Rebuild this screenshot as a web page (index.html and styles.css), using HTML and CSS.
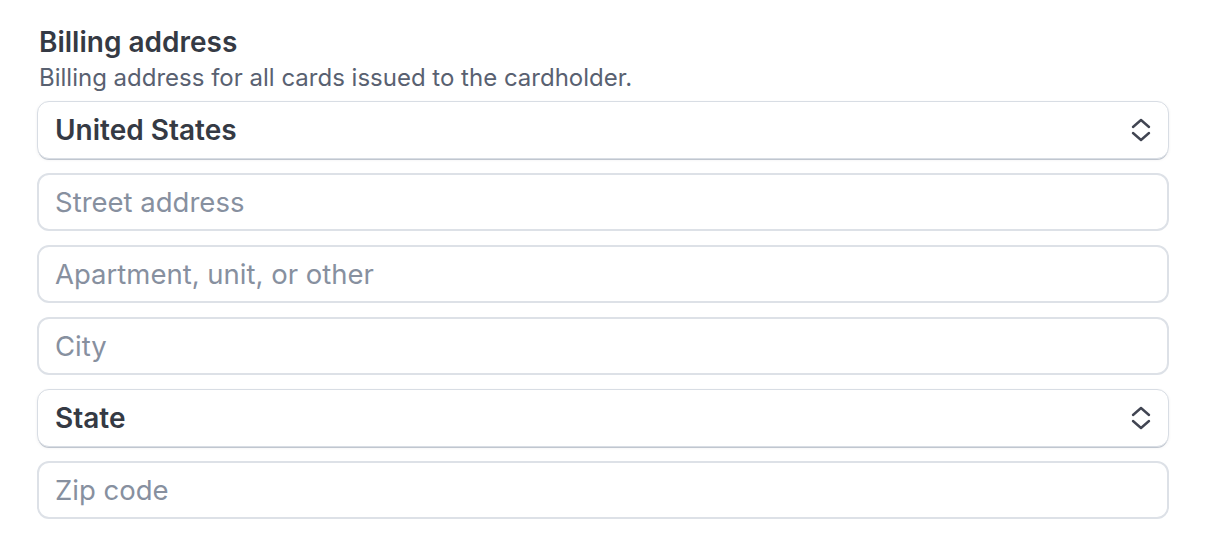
FILE: index.html
```html
<!DOCTYPE html>
<html lang="en">
<head>
  <meta charset="UTF-8" />
  <title>Billing address</title>
  <link rel="stylesheet" href="styles.css">
</head>
<body>
  <div class="section">
    <h2 class="title">Billing address</h2>
    <p class="subtitle">Billing address for all cards issued to the cardholder.</p>

    <div class="fields">
      <div class="select">
        <span class="value">United States</span>
        <svg class="chevrons" width="20" height="24" viewBox="0 0 20 24" fill="none" stroke="#414552" stroke-width="2.4" stroke-linecap="round" stroke-linejoin="round">
          <path d="M2 9 L10 2 L18 9" />
          <path d="M2 15 L10 22 L18 15" />
        </svg>
      </div>
      <input class="input" type="text" placeholder="Street address">
      <input class="input" type="text" placeholder="Apartment, unit, or other">
      <input class="input" type="text" placeholder="City">
      <div class="select">
        <span class="value">State</span>
        <svg class="chevrons" width="20" height="24" viewBox="0 0 20 24" fill="none" stroke="#414552" stroke-width="2.4" stroke-linecap="round" stroke-linejoin="round">
          <path d="M2 9 L10 2 L18 9" />
          <path d="M2 15 L10 22 L18 15" />
        </svg>
      </div>
      <input class="input" type="text" placeholder="Zip code">
    </div>
  </div>
</body>
</html>
```

FILE: styles.css
```css
body {
  margin: 0;
  background: #fff;
  font-family: Inter, "Noto Sans", sans-serif;
}

.section {
  padding: 24px 39px 0 37px;
}

.title {
  margin: 0 0 0 2px;
  font-size: 28px;
  line-height: 36px;
  font-weight: 600;
  color: #353a44;
}

.subtitle {
  margin: 0 0 5px 2px;
  font-size: 24px;
  line-height: 36px;
  color: #596171;
}

.fields {
  display: flex;
  flex-direction: column;
  gap: 14px;
}

.select,
.input {
  box-sizing: border-box;
  width: 100%;
  height: 58px;
  border-radius: 12px;
  background: #fff;
  font-family: inherit;
}

.select {
  display: flex;
  align-items: center;
  justify-content: space-between;
  padding: 0 17px 0 17px;
  border: 1px solid #d8dde4;
  box-shadow: 0 2px 0 -1px #c0c6cf, 0 1px 3px rgba(64, 68, 82, 0.08);
  font-size: 28px;
}

.value {
  font-weight: 600;
  color: #353a44;
}

.chevrons {
  display: block;
}

.input {
  padding: 0 16px;
  border: 2px solid #dde1e7;
  color: #353a44;
  font-size: 27.5px;
  outline: none;
}

.input::placeholder {
  color: #87909f;
}
```
